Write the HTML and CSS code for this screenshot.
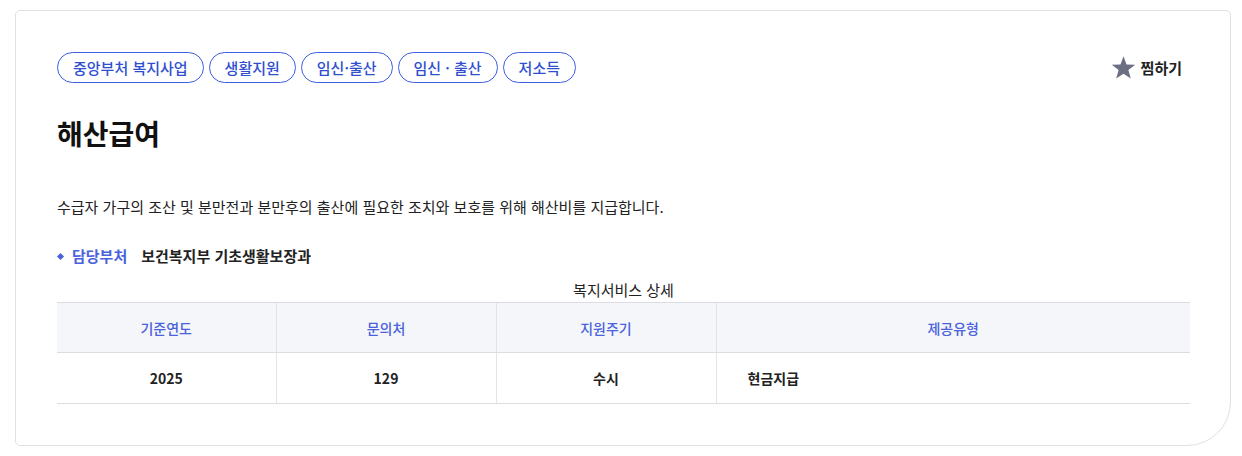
FILE: index.html
```html
<!DOCTYPE html>
<html lang="ko">
<head>
<meta charset="utf-8">
<title>해산급여</title>
<link rel="stylesheet" href="styles.css">
</head>
<body>
<div class="card">
  <div class="top">
    <ul class="tags">
      <li class="tag">중앙부처 복지사업</li>
      <li class="tag">생활지원</li>
      <li class="tag">임신·출산</li>
      <li class="tag">임신 · 출산</li>
      <li class="tag">저소득</li>
    </ul>
    <button class="wish" type="button">
      <svg class="star" viewBox="0 0 24 24" width="25" height="25" aria-hidden="true"><path d="M12 1.2 L14.9 9.0 L23.2 9.3 L16.7 14.5 L19 22.6 L12 17.9 L5 22.6 L7.3 14.5 L0.8 9.3 L9.1 9.0 Z" fill="#6c6f83"/></svg>
      <span>찜하기</span>
    </button>
  </div>
  <h1 class="title">해산급여</h1>
  <p class="desc">수급자 가구의 조산 및 분만전과 분만후의 출산에 필요한 조치와 보호를 위해 해산비를 지급합니다.</p>
  <div class="dept"><span class="dept-label">담당부처</span><span class="dept-value">보건복지부 기초생활보장과</span></div>
  <table class="detail">
    <caption>복지서비스 상세</caption>
    <thead>
      <tr><th class="c1">기준연도</th><th class="c2">문의처</th><th class="c3">지원주기</th><th>제공유형</th></tr>
    </thead>
    <tbody>
      <tr><td>2025</td><td>129</td><td>수시</td><td class="left">현금지급</td></tr>
    </tbody>
  </table>
</div>
</body>
</html>
```
FILE: styles.css
```css
* { box-sizing: border-box; }
html, body { margin: 0; padding: 0; background: #fff; }
body {
  font-family: "Noto Sans CJK KR", "Noto Sans", sans-serif;
  color: #222;
}
.card {
  margin: 10px 0 0 15px;
  width: 1216px;
  height: 436px;
  border: 1px solid #e1e1e4;
  border-radius: 5px 5px 44px 5px;
  padding: 41px 40px 0 41px;
}
.top {
  display: flex;
  align-items: center;
  justify-content: space-between;
}
.tags {
  display: flex;
  gap: 5px;
  list-style: none;
  margin: 0;
  padding: 0;
}
.tag {
  height: 31px;
  line-height: 29px;
  padding: 0 15px;
  border: 1px solid #3d5ee0;
  border-radius: 16px;
  font-size: 15px;
  font-weight: 500;
  color: #2f4fcf;
  white-space: nowrap;
}
.wish {
  display: flex;
  align-items: center;
  gap: 5px;
  background: none;
  border: 0;
  padding: 0 8px 0 0;
  font-family: inherit;
  font-size: 15px;
  font-weight: 700;
  color: #222;
}
.title {
  margin: 30px 0 0;
  font-size: 28px;
  line-height: 40px;
  font-weight: 700;
  color: #111;
}
.desc {
  margin: 42px 0 0;
  font-size: 15px;
  line-height: 24px;
  color: #222;
}
.dept {
  margin-top: 25px;
  display: flex;
  align-items: center;
  font-size: 15px;
  line-height: 24px;
}
.dept-label {
  position: relative;
  padding-left: 15px;
  margin-right: 14px;
  font-weight: 700;
  color: #4a62db;
}
.dept-label::before {
  content: "";
  position: absolute;
  left: 1px;
  top: 10px;
  width: 5px;
  height: 5px;
  background: #4a62db;
  transform: rotate(45deg);
}
.dept-value { font-weight: 700; color: #222; }
.detail {
  margin-top: 12px;
  width: 1133px;
  border-collapse: collapse;
  font-size: 14px;
}
.detail caption {
  font-size: 15px;
  line-height: 20px;
  padding-bottom: 2px;
  color: #222;
}
.detail th {
  height: 50px;
  background: #f5f6fa;
  border-top: 1px solid #dcdde1;
  border-bottom: 1px solid #dcdde1;
  border-left: 1px solid #e3e4e8;
  font-weight: 500;
  color: #4a62db;
  text-align: center;
}
.detail th:first-child, .detail td:first-child { border-left: 0; }
.detail .c1 { width: 219px; }
.detail .c2, .detail .c3 { width: 220px; }
.detail td {
  height: 51px;
  border-bottom: 1px solid #dcdde1;
  border-left: 1px solid #e3e4e8;
  font-weight: 700;
  color: #222;
  text-align: center;
}
.detail td.left { text-align: left; padding-left: 31px; }
```
